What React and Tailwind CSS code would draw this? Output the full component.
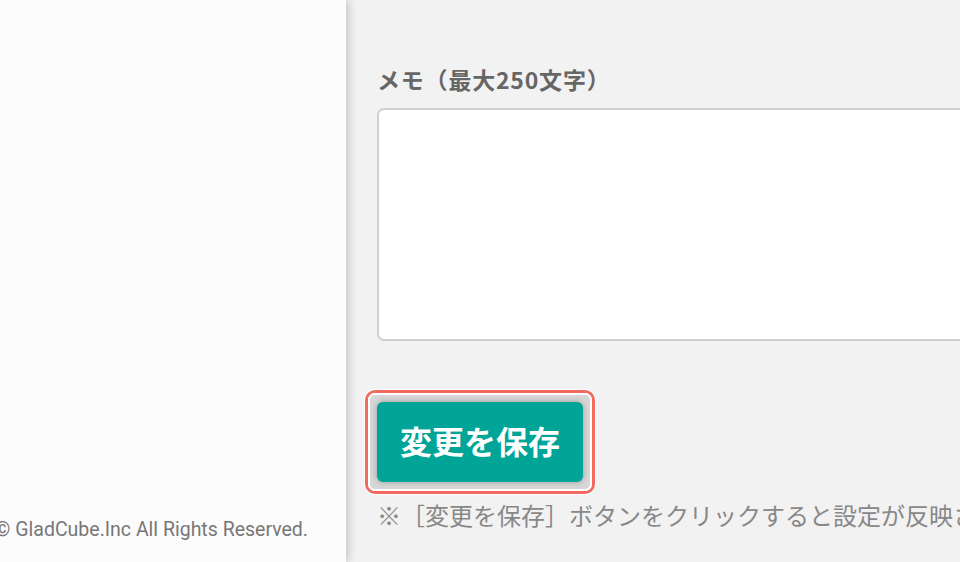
import React from "react";

const App = () => {
  return (
    <div className="flex w-[960px] h-[562px] overflow-hidden bg-[#f2f2f2] font-['Noto_Sans_CJK_JP',sans-serif]">
      <aside className="relative z-10 w-[346px] shrink-0 bg-[#fcfcfc] shadow-[3px_0_8px_rgba(0,0,0,0.18)] flex flex-col justify-end overflow-hidden">
        <div className="flex justify-end pr-[38px] pb-[19px] whitespace-nowrap">
          <p className="text-[#777777] text-[19.5px] leading-[26px] font-['Roboto',sans-serif]">
            © GladCube.Inc All Rights Reserved.
          </p>
        </div>
      </aside>

      <main className="flex-1 overflow-hidden pl-[31px] pt-[64px]">
        <div className="w-[800px]">
          <label className="block text-[#666666] text-[23px] leading-[30px] font-bold tracking-[0.8px]">
            メモ（最大250文字）
          </label>
          <textarea className="block mt-[14px] w-full h-[233px] bg-white border-2 border-[#cfcfcf] rounded-[7px] resize-none outline-none" />

          <div className="mt-[49px] -ml-[12px] inline-flex rounded-[10px] border-[3px] border-[#f26b60] shadow-[0_0_0_1px_#ffffff]">
            <div className="rounded-[7px] border-2 border-white bg-[#d6d6d6] p-[7px]">
              <button className="w-[206px] h-[80px] pb-[4px] rounded-[6px] bg-[#00a597] text-white text-[32px] font-bold leading-none shadow-[0_0_5px_rgba(0,0,0,0.3)]">
                変更を保存
              </button>
            </div>
          </div>

          <p className="mt-[6px] text-[#888888] text-[24px] leading-[30px] whitespace-nowrap">
            ※［変更を保存］ボタンをクリックすると設定が反映されます。
          </p>
        </div>
      </main>
    </div>
  );
};

export default App;
